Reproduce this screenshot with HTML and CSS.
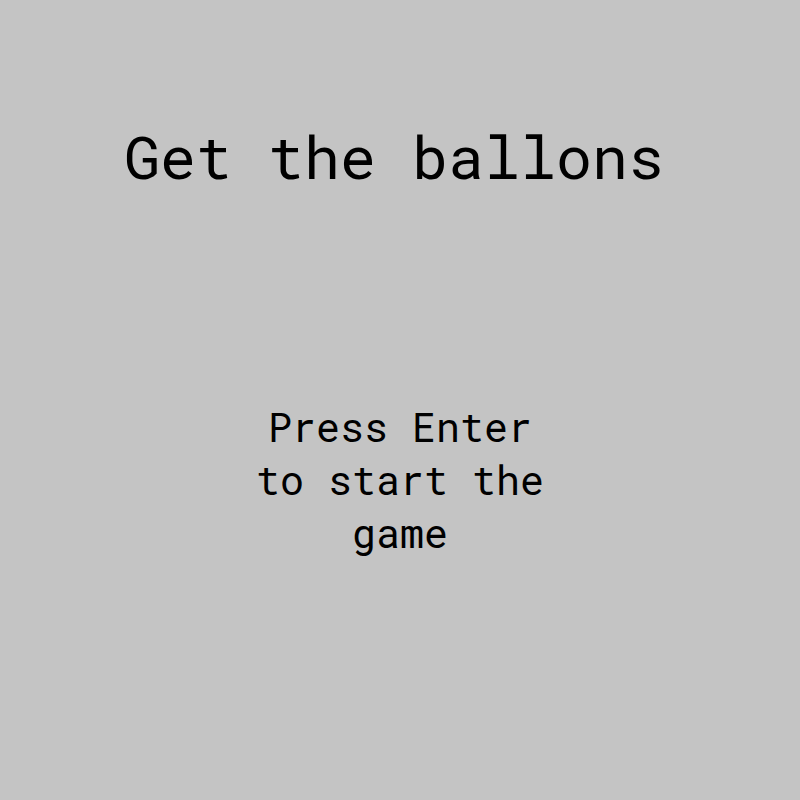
FILE: index.html
```html
<!DOCTYPE html>
<html>
<head>
<meta charset="utf-8">
<link rel="stylesheet" href="styles.css">
</head>
<body>
<main class="screen">
  <h1 class="title">Get the ballons</h1>
  <p class="prompt">Press Enter to start the game</p>
</main>
</body>
</html>
```
FILE: styles.css
```css
html, body {
  margin: 0;
  padding: 0;
  background: #c4c4c4;
}
.screen {
  width: 800px;
  height: 800px;
  display: flex;
  flex-direction: column;
  align-items: center;
  font-family: "Roboto Mono", "DejaVu Sans Mono", "Liberation Mono", monospace;
  color: #000;
}
.title {
  margin: 121px 12px 0 0;
  font-size: 60px;
  font-weight: 400;
  line-height: 70px;
  text-align: center;
}
.prompt {
  margin: 209px 0 0;
  width: 310px;
  font-size: 40px;
  line-height: 53px;
  text-align: center;
}
```
